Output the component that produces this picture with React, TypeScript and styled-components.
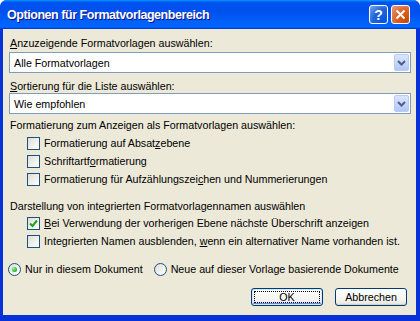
import React from "react";
import styled, { createGlobalStyle } from "styled-components";

const GlobalStyle = createGlobalStyle`
  html, body {
    margin: 0;
    padding: 0;
    background: #ffffff;
  }
  * {
    box-sizing: border-box;
  }
`;

const Window = styled.div`
  width: 420px;
  height: 321px;
  display: flex;
  flex-direction: column;
  background: #0831d9;
  border-radius: 7px 7px 0 0;
  overflow: hidden;
  font-family: "Liberation Sans", Arial, sans-serif;
  font-size: 10.7px;
  color: #000;
`;

const TitleBar = styled.div`
  height: 29px;
  flex-shrink: 0;
  display: flex;
  align-items: center;
  padding: 0 10px 0 7px;
  background: linear-gradient(
    180deg,
    #0997ff,
    #0053ee 8%,
    #0050ee 40%,
    #06f 88%,
    #06f 93%,
    #005bff 95%,
    #003dd7 96%,
    #003dd7
  );
`;

const TitleText = styled.div`
  flex: 1;
  color: #fff;
  font-weight: bold;
  font-size: 12.5px;
  letter-spacing: -0.45px;
  text-shadow: 1px 1px #0f1089;
  padding-top: 1px;
`;

const TitleButtons = styled.div`
  display: flex;
  gap: 3px;
`;

const TitleButton = styled.div<{ $close?: boolean }>`
  width: 19px;
  height: 19px;
  border: 1px solid #fff;
  border-radius: 3px;
  display: flex;
  align-items: center;
  justify-content: center;
  color: #fff;
  font-weight: bold;
  font-size: 14px;
  background: ${(p) =>
    p.$close
      ? "radial-gradient(circle at 90% 90%, #cc4600 0%, #dc6527 55%, #e5a08a 100%)"
      : "radial-gradient(circle at 90% 90%, #0054e9 0%, #2263d5 55%, #7fa6f0 100%)"};
`;

const Frame = styled.div`
  flex: 1;
  display: flex;
  padding: 0 4px 6px 3px;
`;

const Body = styled.div`
  flex: 1;
  min-width: 0;
  overflow: hidden;
  background: #ece9d8;
  padding: 8px 5px 0 6px;
  display: flex;
  flex-direction: column;
`;

const Label = styled.div<{ $gap?: number }>`
  height: 13px;
  line-height: 13px;
  padding-left: 1px;
  margin-top: ${(p) => p.$gap ?? 0}px;
  white-space: nowrap;
`;

const Select = styled.div<{ $gap?: number }>`
  height: 21px;
  margin-top: ${(p) => p.$gap ?? 0}px;
  border: 1px solid #7f9db9;
  background: #fff;
  display: flex;
  align-items: center;
  padding: 1px 1px 1px 4px;
`;

const SelectValue = styled.div`
  flex: 1;
`;

const DropButton = styled.div`
  width: 15px;
  height: 17px;
  border-radius: 2px;
  border: 1px solid #b9cbf3;
  background: linear-gradient(180deg, #dbe5fd 0%, #c3d4fb 60%, #b2c6f5 100%);
  display: flex;
  align-items: center;
  justify-content: center;
`;

const CheckRow = styled.div<{ $gap?: number }>`
  height: 18px;
  margin-top: ${(p) => p.$gap ?? 0}px;
  margin-left: 18px;
  display: flex;
  align-items: center;
  gap: 4px;
  white-space: nowrap;
`;

const Box = styled.div`
  width: 13px;
  height: 13px;
  flex-shrink: 0;
  border: 1px solid #1c5180;
  background: linear-gradient(135deg, #dcdcd7 0%, #f2f2ef 60%, #ffffff 100%);
  display: flex;
  align-items: center;
  justify-content: center;
`;

const RadioRow = styled.div`
  height: 18px;
  margin-top: 10px;
  margin-left: -1px;
  display: flex;
  align-items: center;
  white-space: nowrap;
`;

const RadioItem = styled.div`
  display: flex;
  align-items: center;
  gap: 4px;
  margin-right: 11px;
`;

const Circle = styled.div`
  width: 13px;
  height: 13px;
  border-radius: 50%;
  border: 1px solid #1c5180;
  background: linear-gradient(135deg, #dcdcd7 0%, #f2f2ef 60%, #ffffff 100%);
  display: flex;
  align-items: center;
  justify-content: center;
`;

const Dot = styled.div`
  width: 5px;
  height: 5px;
  border-radius: 50%;
  background: radial-gradient(circle at 35% 35%, #a2eea2 0%, #3fbf3f 50%, #1a931a 100%);
`;

const ButtonRow = styled.div`
  display: flex;
  justify-content: flex-end;
  gap: 12px;
  margin-top: 10px;
  padding-right: 4px;
`;

const Button = styled.div<{ $default?: boolean }>`
  width: 72px;
  height: 18px;
  border: 1px solid #003c74;
  border-radius: 3px;
  background: linear-gradient(180deg, #ffffff 0%, #f3f3ef 70%, #e3e2da 100%);
  display: flex;
  align-items: center;
  justify-content: center;
  box-shadow: ${(p) =>
    p.$default ? "inset 0 0 0 1px #cee7ff, inset 0 -1px 0 1px #6982ee" : "inset 0 -1px 0 #d6d0c5"};
  padding: 2px;
`;

const Focus = styled.div`
  width: 100%;
  height: 100%;
  border: 1px dotted #000;
  display: flex;
  align-items: center;
  justify-content: center;
`;

const Chevron = () => (
  <svg width="9" height="6" viewBox="0 0 9 6">
    <path d="M1 1 L4.5 4.5 L8 1" fill="none" stroke="#4d6185" strokeWidth="2" />
  </svg>
);

const Tick = () => (
  <svg width="9" height="9" viewBox="0 0 9 9">
    <path d="M1 4.5 L3.5 7 L8 1.5" fill="none" stroke="#21a121" strokeWidth="2" />
  </svg>
);

const Check: React.FC<{ checked?: boolean; children: React.ReactNode; gap?: number }> = ({
  checked,
  children,
  gap,
}) => (
  <CheckRow $gap={gap}>
    <Box>{checked && <Tick />}</Box>
    <span>{children}</span>
  </CheckRow>
);

export default function App() {
  return (
    <>
      <GlobalStyle />
      <Window>
        <TitleBar>
          <TitleText>Optionen für Formatvorlagenbereich</TitleText>
          <TitleButtons>
            <TitleButton>?</TitleButton>
            <TitleButton $close>
              <svg width="11" height="11" viewBox="0 0 11 11">
                <path d="M1.5 1.5 L9.5 9.5 M9.5 1.5 L1.5 9.5" stroke="#fff" strokeWidth="2" />
              </svg>
            </TitleButton>
          </TitleButtons>
        </TitleBar>
        <Frame>
          <Body>
            <Label>
              <u>A</u>nzuzeigende Formatvorlagen auswählen:
            </Label>
            <Select $gap={2}>
              <SelectValue>Alle Formatvorlagen</SelectValue>
              <DropButton>
                <Chevron />
              </DropButton>
            </Select>
            <Label $gap={7}>
              <u>S</u>ortierung für die Liste auswählen:
            </Label>
            <Select>
              <SelectValue>Wie empfohlen</SelectValue>
              <DropButton>
                <Chevron />
              </DropButton>
            </Select>
            <Label $gap={5}>Formatierung zum Anzeigen als Formatvorlagen auswählen:</Label>
            <Check gap={2}>
              Formatierung auf Absat<u>z</u>ebene
            </Check>
            <Check>
              Schriftartf<u>o</u>rmatierung
            </Check>
            <Check>
              Formatierung für Aufzählungszei<u>c</u>hen und Nummerierungen
            </Check>
            <Label $gap={12}>Darstellung von integrierten Formatvorlagennamen auswählen</Label>
            <Check checked gap={1}>
              <u>B</u>ei Verwendung der vorherigen Ebene nächste Überschrift anzeigen
            </Check>
            <Check>
              Integrierten Namen ausblenden, <u>w</u>enn ein alternativer Name vorhanden ist.
            </Check>
            <RadioRow>
              <RadioItem>
                <Circle>
                  <Dot />
                </Circle>
                <span>Nur in diesem Dokument</span>
              </RadioItem>
              <RadioItem>
                <Circle />
                <span>Neue auf dieser Vorlage basierende Dokumente</span>
              </RadioItem>
            </RadioRow>
            <ButtonRow>
              <Button $default>
                <Focus>OK</Focus>
              </Button>
              <Button>Abbrechen</Button>
            </ButtonRow>
          </Body>
        </Frame>
      </Window>
    </>
  );
}
